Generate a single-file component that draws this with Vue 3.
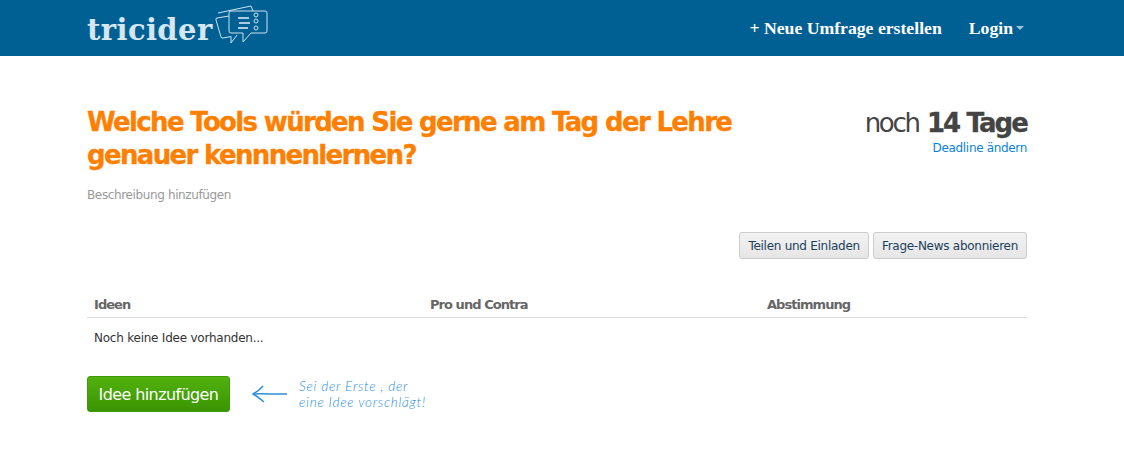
<template>
  <div class="page">
    <header class="topbar">
      <div class="topbar-inner">
        <a class="logo">
          <span class="logo-text">tricider</span>
          <svg class="logo-icon" width="56" height="42" viewBox="0 0 56 42" fill="none" stroke="#cfe2ee" stroke-width="1">
            <path d="M14 11 L2 13 Q0.500 13.300 1 15 L6 32 Q6.500 33.500 8 33 L16 31.500 L16 38 L22 30" />
            <path d="M3 8 L36 1 L38 6" />
            <path d="M16 6 L50 6 Q52 6 52 8 L52 26 Q52 28 50 28 L36 28 L28 37 L28 28 L16 28 Q14 28 14 26 L14 8 Q14 6 16 6 Z" />
            <path d="M23 13 H34 M24 18 H35 M23 23 H33" stroke-width="1.500" stroke="#e4f0f6" />
            <circle cx="41" cy="10" r="2" />
            <circle cx="41" cy="16" r="2" />
            <circle cx="41" cy="23" r="2" />
          </svg>
        </a>
        <nav class="nav">
          <a>+ Neue Umfrage erstellen</a>
          <a class="login">Login<span class="caret"></span></a>
        </nav>
      </div>
    </header>

    <main class="content">
      <div class="question">
        <div class="question-main">
          <h1>Welche Tools würden Sie gerne am Tag der Lehre genauer kennnenlernen?</h1>
          <p class="description">Beschreibung hinzufügen</p>
        </div>
        <div class="deadline">
          <div class="remaining"><span class="noch">noch</span> <b>14 Tage</b></div>
          <a class="deadline-link">Deadline ändern</a>
        </div>
      </div>

      <div class="actions">
        <button v-for="label in actions" :key="label" class="btn">{{ label }}</button>
      </div>

      <div class="table-head">
        <div v-for="col in columns" :key="col">{{ col }}</div>
      </div>
      <div class="empty">Noch keine Idee vorhanden...</div>

      <div class="add-row">
        <button class="btn-add">Idee hinzufügen</button>
        <svg class="arrow" width="36" height="18" viewBox="0 0 36 18" fill="none" stroke="#2a8fdc" stroke-width="1.500">
          <path d="M1 9 C14 8.500 24 9.500 35 9" />
          <path d="M11 1 C8 4.500 5 7 1 9 C5 11 8 13.500 12 17" />
        </svg>
        <div class="hint">
          <div>Sei der Erste , der</div>
          <div>eine Idee vorschlägt!</div>
        </div>
      </div>
    </main>
  </div>
</template>

<script setup>
const actions = ['Teilen und Einladen', 'Frage-News abonnieren']
const columns = ['Ideen', 'Pro und Contra', 'Abstimmung']
</script>

<style>
body {
  background: #fff;
}
</style>

<style scoped>
.page {
  font-family: "DejaVu Sans", sans-serif;
  color: #333;
}
.topbar {
  height: 56px;
  background: #006094;
}
.topbar-inner {
  width: 940px;
  height: 56px;
  margin-left: 87px;
  display: flex;
  justify-content: space-between;
  align-items: center;
}
.logo {
  display: flex;
  align-items: center;
}
.logo-text {
  font-family: "DejaVu Serif", serif;
  font-weight: bold;
  font-size: 29px;
  letter-spacing: 0.4px;
  color: #d5e6f0;
  width: 128px;
  margin-top: 3px;
}
.logo-icon {
  margin-top: -4px;
}
.nav {
  display: flex;
  gap: 27px;
  font-family: "Liberation Serif", serif;
  font-weight: bold;
  font-size: 17.7px;
  color: #fff;
  padding-right: 3px;
}
.login {
  display: flex;
  align-items: center;
}
.caret {
  margin-left: 3px;
  border-left: 4px solid transparent;
  border-right: 4px solid transparent;
  border-top: 4px solid #9cc4dc;
}
.content {
  width: 940px;
  margin-left: 87px;
}
.question {
  display: flex;
  justify-content: space-between;
  padding-top: 50px;
}
.question-main {
  width: 680px;
}
h1 {
  margin: 0;
  font-size: 26px;
  line-height: 33px;
  font-weight: bold;
  letter-spacing: -1.66px;
  -webkit-text-stroke: 0.3px #ff8000;
  color: #ff8000;
}
.description {
  margin: 14px 0 0;
  font-size: 12px;
  line-height: 18px;
  letter-spacing: -0.37px;
  color: #999;
}
.deadline {
  text-align: right;
  padding-top: 1px;
}
.remaining {
  font-size: 26px;
  line-height: 33px;
  color: #444;
}
.noch {
  letter-spacing: -2.3px;
}
.remaining b {
  letter-spacing: -1.9px;
  -webkit-text-stroke: 0.3px #444;
}
.deadline-link {
  display: block;
  font-size: 12px;
  line-height: 16px;
  letter-spacing: -0.33px;
  color: #0a82d8;
}
.actions {
  display: flex;
  justify-content: flex-end;
  gap: 4px;
  margin-top: 28px;
}
.btn {
  height: 27px;
  padding: 0 8px;
  font-family: inherit;
  font-size: 12px;
  letter-spacing: -0.27px;
  color: #1c3f5c;
  background: linear-gradient(#f2f2f2, #e6e6e6);
  border: 1px solid #ccc;
  border-radius: 3px;
}
.table-head {
  display: grid;
  grid-template-columns: 336px 337px 1fr;
  margin-top: 37px;
  padding: 0 7px 4px;
  border-bottom: 1px solid #ddd;
  font-size: 13px;
  line-height: 17px;
  font-weight: bold;
  letter-spacing: -0.95px;
  color: #666;
}
.empty {
  padding: 11px 7px 0;
  font-size: 12px;
  line-height: 18px;
  letter-spacing: -0.23px;
  color: #333;
}
.add-row {
  display: flex;
  align-items: center;
  margin-top: 29px;
}
.btn-add {
  width: 143px;
  height: 36px;
  padding: 0;
  font-family: inherit;
  font-size: 16px;
  letter-spacing: -0.6px;
  color: #fff;
  background: linear-gradient(#52b20f, #3a9400);
  border: 1px solid #3f9a05;
  border-radius: 3px;
}
.arrow {
  margin-left: 22px;
}
.hint {
  margin-left: 11px;
  font-family: "Lato", sans-serif;
  font-style: italic;
  font-weight: 300;
  font-size: 13.5px;
  line-height: 16px;
  letter-spacing: 0.75px;
  color: #2a8fdc;
}
</style>
